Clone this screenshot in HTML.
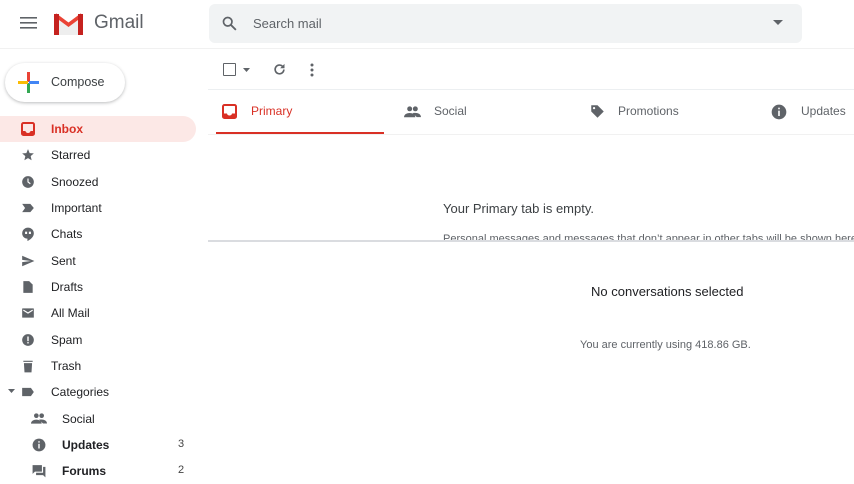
<!DOCTYPE html>
<html><head><style>
*{margin:0;padding:0;box-sizing:border-box}
body{width:854px;height:480px;overflow:hidden;background:#fff;font-family:"Liberation Sans",sans-serif;position:relative;color:#202124}
.a{position:absolute}
.nav{position:absolute;left:0;width:196px;height:26px;font-size:12px;color:#202124}
.nav span{position:absolute;left:51px;top:6px}
.nav svg{position:absolute;left:21px;top:6px}
.ic{fill:#5f6368}
.cnt{position:absolute;left:178px;top:6px;font-size:11px;color:#444}
.tab{position:absolute;top:104px;font-size:12px;color:#5f6368}
</style></head><body>
<!-- header -->
<svg class="a" style="left:20px;top:16px" width="17" height="14"><rect y="1" width="17" height="1.6" fill="#5f6368"/><rect y="6" width="17" height="1.6" fill="#5f6368"/><rect y="11" width="17" height="1.6" fill="#5f6368"/></svg>
<svg class="a" style="left:53px;top:12px" width="31" height="23" viewBox="0 0 31 23"><path d="M2 3 L15.5 13 L29 3" stroke="#ea4335" stroke-width="4" fill="none"/><rect x="1" y="2" width="5" height="21" fill="#c5221f"/><rect x="25" y="2" width="5" height="21" fill="#c5221f"/><path d="M6 8 L15.5 15 L25 8 V23 H6Z" fill="#eee"/></svg>
<div class="a" style="left:94px;top:12px;font-size:19px;color:#5f6368">Gmail</div>
<div class="a" style="left:209px;top:4px;width:593px;height:39px;background:#f1f3f4;border-radius:6px"></div>
<svg class="a" style="left:221px;top:15px" width="17" height="17" viewBox="0 0 24 24"><circle cx="9.5" cy="9.5" r="6" stroke="#5f6368" stroke-width="2.4" fill="none"/><path d="M14 14l7 7" stroke="#5f6368" stroke-width="2.6"/></svg>
<div class="a" style="left:253px;top:16px;font-size:13px;color:#5f6368">Search mail</div>
<svg class="a" style="left:773px;top:20px" width="10" height="6"><path d="M0 0h10L5 5z" fill="#5f6368"/></svg>
<div class="a" style="left:0;top:48px;width:854px;height:1px;background:#f1f1f1"></div>
<!-- compose -->
<div class="a" style="left:5px;top:63px;width:120px;height:39px;border-radius:20px;background:#fff;box-shadow:0 1px 3px rgba(60,64,67,.35)"></div>
<svg class="a" style="left:18px;top:72px" width="21" height="21"><rect x="9" y="0" width="3" height="10" fill="#ea4335"/><rect x="9" y="11" width="3" height="10" fill="#34a853"/><rect x="0" y="9" width="10" height="3" fill="#fbbc04"/><rect x="11" y="9" width="10" height="3" fill="#4285f4"/></svg>
<div class="a" style="left:51px;top:75px;font-size:12.5px;color:#3c4043">Compose</div>
<!-- nav -->
<div class="a" style="left:0;top:116px;width:196px;height:26px;background:#fce8e6;border-radius:0 13px 13px 0"></div>
<div class="nav" style="top:116px;color:#d93025;font-weight:bold"><svg width="14" height="14"><rect x="1" y="1" width="12" height="12" rx="1.5" stroke="#d93025" stroke-width="2" fill="none"/><path d="M1 9h3.5a2.5 2 0 0 0 5 0H13V13H1z" fill="#d93025"/></svg><span>Inbox</span></div>
<div class="nav" style="top:142px"><svg width="14" height="14" viewBox="0 0 24 24"><path class="ic" d="M12 17.3l6.2 3.7-1.6-7 5.4-4.7-7.2-.6L12 2 9.2 8.7 2 9.3l5.4 4.7-1.6 7z"/></svg><span>Starred</span></div>
<div class="nav" style="top:169px"><svg width="14" height="14" viewBox="0 0 24 24"><circle class="ic" cx="12" cy="12" r="10"/><path d="M12 6v6l4 3" stroke="#fff" stroke-width="2" fill="none"/></svg><span>Snoozed</span></div>
<div class="nav" style="top:195px"><svg width="14" height="14" viewBox="0 0 24 24"><path class="ic" d="M2 5h14l6 7-6 7H2l5-7z"/></svg><span>Important</span></div>
<div class="nav" style="top:221px"><svg width="14" height="14" viewBox="0 0 24 24"><path class="ic" d="M12 1a10 10 0 0 0-10 10c0 5 4 9 9 9v4c5-2 11-7 11-13A10 10 0 0 0 12 1z"/><rect x="7" y="8" width="3.5" height="4" fill="#fff"/><rect x="13.5" y="8" width="3.5" height="4" fill="#fff"/></svg><span>Chats</span></div>
<div class="nav" style="top:248px"><svg width="14" height="14" viewBox="0 0 24 24"><path class="ic" d="M2 21l21-9L2 3v7l15 2-15 2z"/></svg><span>Sent</span></div>
<div class="nav" style="top:274px"><svg width="14" height="14" viewBox="0 0 24 24"><path class="ic" d="M4 2h10l6 6v14H4z"/></svg><span>Drafts</span></div>
<div class="nav" style="top:300px"><svg width="14" height="14" viewBox="0 0 24 24"><rect class="ic" x="2" y="4" width="20" height="16" rx="1"/><path d="M4 7l8 5 8-5" stroke="#fff" stroke-width="2" fill="none"/></svg><span>All Mail</span></div>
<div class="nav" style="top:327px"><svg width="14" height="14" viewBox="0 0 24 24"><circle class="ic" cx="12" cy="12" r="10"/><rect x="10.8" y="6" width="2.4" height="8" fill="#fff"/><rect x="10.8" y="15.5" width="2.4" height="2.4" fill="#fff"/></svg><span>Spam</span></div>
<div class="nav" style="top:353px"><svg width="14" height="14" viewBox="0 0 24 24"><path class="ic" d="M5 7h14l-1 16H6zM4 3h16v2H4z"/></svg><span>Trash</span></div>
<svg class="a" style="left:8px;top:389px" width="7" height="4"><path d="M0 0h7L3.5 4z" fill="#5f6368"/></svg>
<div class="nav" style="top:379px"><svg width="14" height="14" viewBox="0 0 24 24"><path class="ic" d="M2 5h15l5 7-5 7H2z"/></svg><span>Categories</span></div>
<div class="nav" style="top:406px"><svg style="left:31px" width="16" height="14" viewBox="0 0 24 20"><circle class="ic" cx="8" cy="5" r="3.5"/><circle class="ic" cx="16" cy="5" r="3.5"/><path class="ic" d="M0 17c0-4 4-6 8-6s8 2 8 6zM12 11c1-.3 2-.3 4-.3 4 0 8 2 8 6h-6z"/></svg><span style="left:62px">Social</span></div>
<div class="nav" style="top:432px;font-weight:bold"><svg style="left:32px" width="14" height="14" viewBox="0 0 24 24"><circle class="ic" cx="12" cy="12" r="11"/><rect x="10.8" y="10" width="2.4" height="8" fill="#fff"/><rect x="10.8" y="5.5" width="2.4" height="2.4" fill="#fff"/></svg><span style="left:62px">Updates</span><div class="cnt" style="font-weight:normal">3</div></div>
<div class="nav" style="top:458px;font-weight:bold"><svg style="left:32px" width="14" height="14" viewBox="0 0 24 24"><path class="ic" d="M1 2h16v11H5l-4 4zM7 15h12V5h4v18l-4-4H7z"/></svg><span style="left:62px">Forums</span><div class="cnt" style="font-weight:normal">2</div></div>
<!-- toolbar -->
<div class="a" style="left:223px;top:63px;width:13px;height:13px;border:1.8px solid #5f6368;border-radius:1px"></div>
<svg class="a" style="left:243px;top:68px" width="7" height="4"><path d="M0 0h7L3.5 4z" fill="#5f6368"/></svg>
<svg class="a" style="left:272px;top:62px" width="15" height="15" viewBox="0 0 24 24"><path d="M19 12a7 7 0 1 1-2-5" stroke="#5f6368" stroke-width="2.6" fill="none"/><path d="M20 3v7h-7z" fill="#5f6368"/></svg>
<svg class="a" style="left:310px;top:63px" width="4" height="14"><circle cx="2" cy="2" r="1.5" fill="#5f6368"/><circle cx="2" cy="7" r="1.5" fill="#5f6368"/><circle cx="2" cy="12" r="1.5" fill="#5f6368"/></svg>
<div class="a" style="left:208px;top:89px;width:646px;height:1px;background:#eceff1"></div>
<!-- tabs -->
<svg class="a" style="left:222px;top:104px" width="15" height="15"><rect x="1" y="1" width="13" height="13" rx="1.5" stroke="#d93025" stroke-width="2" fill="none"/><path d="M1 9.5h4a2.5 2 0 0 0 5 0h4V14H1z" fill="#d93025"/></svg>
<div class="tab" style="left:251px;color:#d93025">Primary</div>
<div class="a" style="left:216px;top:132px;width:168px;height:3px;background:#d93025"></div>
<svg class="a" style="left:404px;top:106px" width="17" height="12" viewBox="0 0 24 17"><circle class="ic" cx="8" cy="4" r="3.5"/><circle class="ic" cx="16" cy="4" r="3.5"/><path class="ic" d="M0 16c0-4 4-6 8-6s8 2 8 6zM12 10c1-.3 2-.3 4-.3 4 0 8 2 8 6h-6z"/></svg>
<div class="tab" style="left:434px">Social</div>
<svg class="a" style="left:590px;top:104px" width="15" height="15" viewBox="0 0 24 24"><path class="ic" d="M2 2h10l10 10-10 10L2 12z"/><circle cx="6.5" cy="6.5" r="1.8" fill="#fff"/></svg>
<div class="tab" style="left:618px">Promotions</div>
<svg class="a" style="left:771px;top:104px" width="16" height="16" viewBox="0 0 24 24"><circle class="ic" cx="12" cy="12" r="11"/><rect x="10.8" y="10" width="2.4" height="8" fill="#fff"/><rect x="10.8" y="5.5" width="2.4" height="2.4" fill="#fff"/></svg>
<div class="tab" style="left:801px">Updates</div>
<div class="a" style="left:208px;top:134px;width:646px;height:1px;background:#f1f1f1"></div>
<!-- empty -->
<div class="a" style="left:443px;top:201px;font-size:13px;color:#3c4043">Your Primary tab is empty.</div>
<div class="a" style="left:443px;top:233px;width:411px;height:8px;overflow:hidden;font-size:11px;color:#5f6368;white-space:nowrap;line-height:13px">Personal messages and messages that don’t appear in other tabs will be shown here.</div>
<div class="a" style="left:208px;top:240px;width:646px;height:2px;background:#dadce0"></div>
<div class="a" style="left:591px;top:284px;font-size:13px;color:#202124">No conversations selected</div>
<div class="a" style="left:580px;top:339px;font-size:11px;color:#5f6368">You are currently using 418.86 GB.</div>
</body></html>
